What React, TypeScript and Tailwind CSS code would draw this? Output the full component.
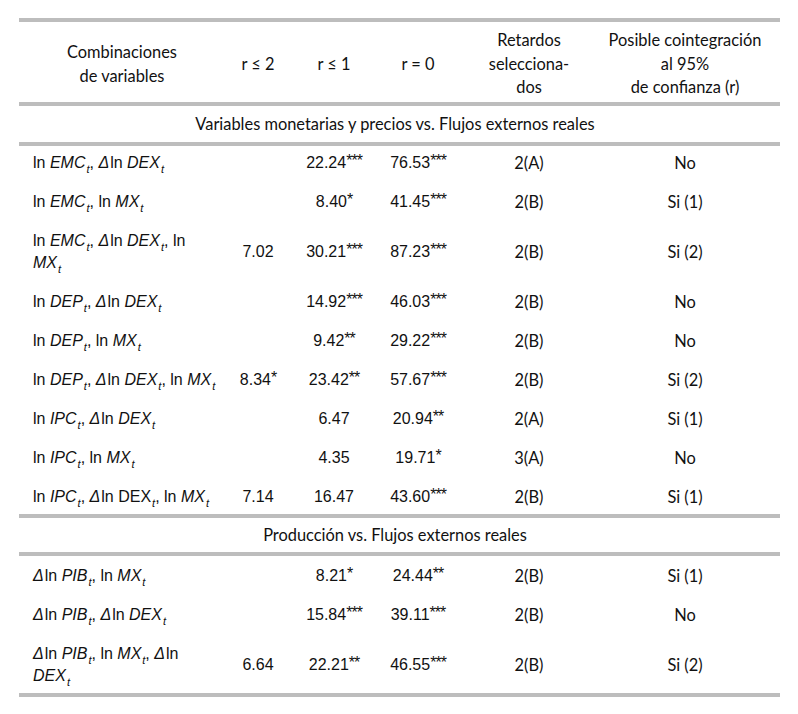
import React from "react";

const cols = "grid grid-cols-[206px_66px_86px_82px_140px_172px]";
const human = "font-['Lato','Open_Sans',sans-serif] text-[16.4px]";
const arial = "font-['Liberation_Sans',Arial,sans-serif] text-[16px]";

function T() {
  return <sub className="text-[11px] italic -bottom-[5px] ml-[1px]">t</sub>;
}

function Ln({ v, d = false, up = false }: { v: string; d?: boolean; up?: boolean }) {
  return (
    <>
      {d && <i className="mr-[1px]">Δ</i>}ln {up ? <span>{v}</span> : <i>{v}</i>}
      <T />
    </>
  );
}

type Row = {
  label: React.ReactNode;
  r2: [string, string];
  r1: [string, string];
  r0: [string, string];
  lag: string;
  coint: string;
};

const monetarias: Row[] = [
  { label: <><Ln v="EMC" />, <Ln v="DEX" d /></>, r2: ["", ""], r1: ["22.24", "***"], r0: ["76.53", "***"], lag: "2(A)", coint: "No" },
  { label: <><Ln v="EMC" />, <Ln v="MX" /></>, r2: ["", ""], r1: ["8.40", "*"], r0: ["41.45", "***"], lag: "2(B)", coint: "Si (1)" },
  { label: <><Ln v="EMC" />, <Ln v="DEX" d />, ln<br /><i>MX</i><T /></>, r2: ["7.02", ""], r1: ["30.21", "***"], r0: ["87.23", "***"], lag: "2(B)", coint: "Si (2)" },
  { label: <><Ln v="DEP" />, <Ln v="DEX" d /></>, r2: ["", ""], r1: ["14.92", "***"], r0: ["46.03", "***"], lag: "2(B)", coint: "No" },
  { label: <><Ln v="DEP" />, <Ln v="MX" /></>, r2: ["", ""], r1: ["9.42", "**"], r0: ["29.22", "***"], lag: "2(B)", coint: "No" },
  { label: <><Ln v="DEP" />, <Ln v="DEX" d />, <Ln v="MX" /></>, r2: ["8.34", "*"], r1: ["23.42", "**"], r0: ["57.67", "***"], lag: "2(B)", coint: "Si (2)" },
  { label: <><Ln v="IPC" />, <Ln v="DEX" d /></>, r2: ["", ""], r1: ["6.47", ""], r0: ["20.94", "**"], lag: "2(A)", coint: "Si (1)" },
  { label: <><Ln v="IPC" />, <Ln v="MX" /></>, r2: ["", ""], r1: ["4.35", ""], r0: ["19.71", "*"], lag: "3(A)", coint: "No" },
  { label: <><Ln v="IPC" />, <Ln v="DEX" d up />, <Ln v="MX" /></>, r2: ["7.14", ""], r1: ["16.47", ""], r0: ["43.60", "***"], lag: "2(B)", coint: "Si (1)" },
];

const produccion: Row[] = [
  { label: <><Ln v="PIB" d />, <Ln v="MX" /></>, r2: ["", ""], r1: ["8.21", "*"], r0: ["24.44", "**"], lag: "2(B)", coint: "Si (1)" },
  { label: <><Ln v="PIB" d />, <Ln v="DEX" d /></>, r2: ["", ""], r1: ["15.84", "***"], r0: ["39.11", "***"], lag: "2(B)", coint: "No" },
  { label: <><Ln v="PIB" d />, <Ln v="MX" />, <i className="mr-[1px]">Δ</i>ln<br /><i>DEX</i><T /></>, r2: ["6.64", ""], r1: ["22.21", "**"], r0: ["46.55", "***"], lag: "2(B)", coint: "Si (2)" },
];

function Stat({ v }: { v: [string, string] }) {
  return (
    <span>
      {v[0]}
      {v[1] && <span className="text-[16px] tracking-[-1px] relative -top-[2px]">{v[1]}</span>}
    </span>
  );
}

function Rule() {
  return <div className="h-[4px] bg-[#bdbdbd]" />;
}

function Rows({ rows, tightTop }: { rows: Row[]; tightTop?: boolean }) {
  return (
    <div>
      {rows.map((r, i) => (
        <div
          key={i}
          className={`${cols} items-center leading-[22px] py-[8.5px] ${
            i === 0 && tightTop ? "pt-[6px]" : ""
          } ${i === rows.length - 1 ? "pb-[6px]" : ""}`}
        >
          <div className={`${arial} pl-[14px]`}>{r.label}</div>
          <div className={`${arial} text-center`}>
            <Stat v={r.r2} />
          </div>
          <div className={`${arial} text-center`}>
            <Stat v={r.r1} />
          </div>
          <div className={`${arial} text-center`}>
            <Stat v={r.r0} />
          </div>
          <div className={`${human} text-center`}>{r.lag}</div>
          <div className={`${human} text-center`}>{r.coint}</div>
        </div>
      ))}
    </div>
  );
}

export default function App() {
  return (
    <div className="bg-white w-[798px] h-[714px] pt-[18px] pl-[19px] text-[#111111]">
      <div className="w-[761px]">
        <Rule />
        <div className={`${cols} ${human} items-center text-center leading-[23.5px] h-[80px] pt-[3px]`}>
          <div>
            Combinaciones
            <br />
            de variables
          </div>
          <div>r ≤ 2</div>
          <div>r ≤ 1</div>
          <div>r = 0</div>
          <div>
            Retardos
            <br />
            selecciona-
            <br />
            dos
          </div>
          <div>
            Posible cointegración
            <br />
            al 95%
            <br />
            de confianza (r)
          </div>
        </div>
        <Rule />
        <div className={`${human} h-[36px] flex items-center justify-center pr-[9px]`}>
          Variables monetarias y precios vs. Flujos externos reales
        </div>
        <Rule />
        <Rows rows={monetarias} tightTop />
        <Rule />
        <div className={`${human} h-[34px] flex items-center justify-center pr-[9px]`}>
          Producción vs. Flujos externos reales
        </div>
        <Rule />
        <Rows rows={produccion} />
        <Rule />
      </div>
    </div>
  );
}
